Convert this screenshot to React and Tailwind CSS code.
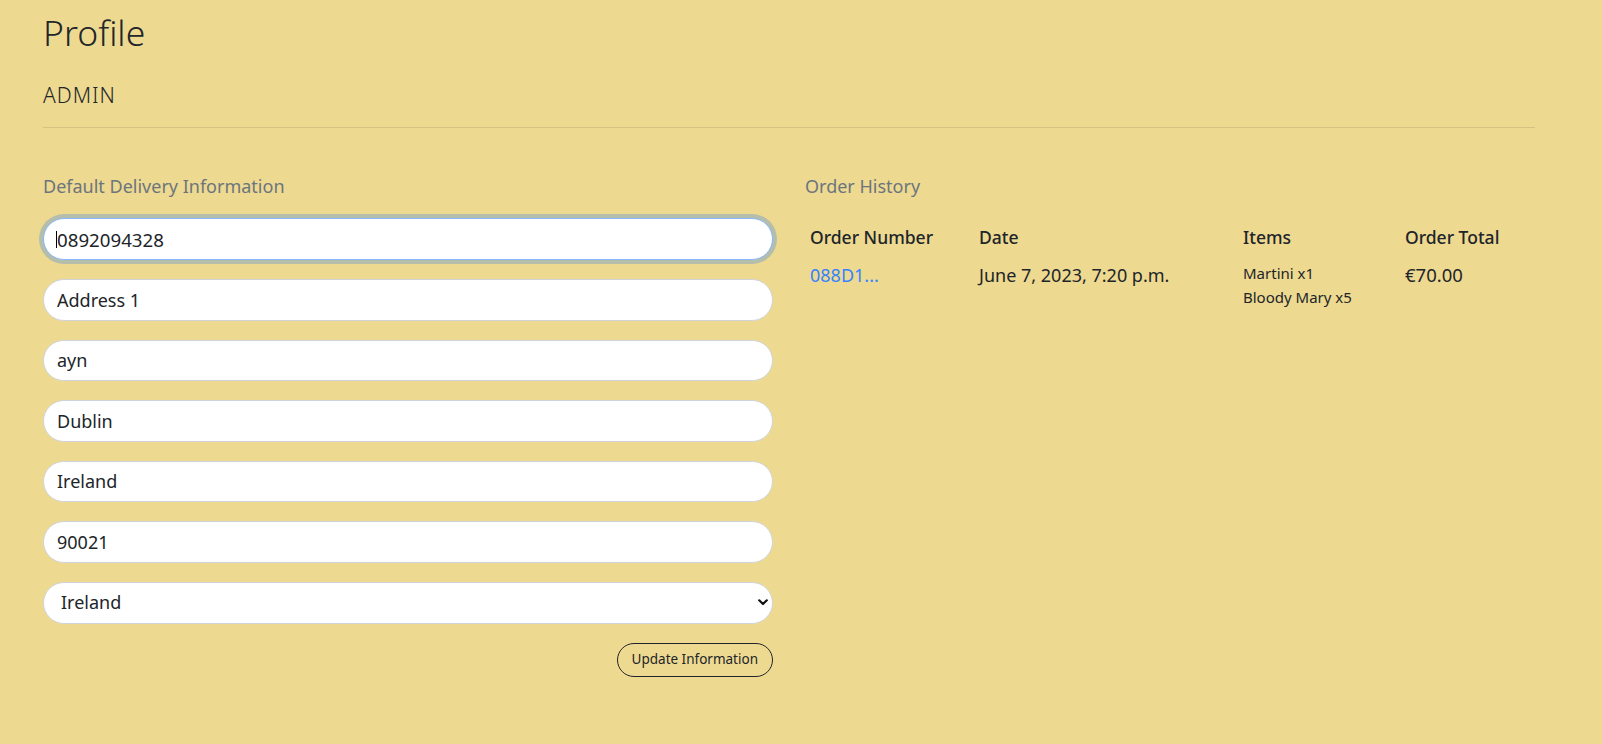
import React from "react";

const inputs = ["Address 1", "ayn", "Dublin", "Ireland", "90021"];

export default function App() {
  return (
    <div className="min-h-screen w-full bg-[#eed991] text-[#212529] font-[family-name:Noto_Sans,sans-serif]">
      <div className="pl-[43px] w-[1535px]">
        <h1 className="pt-[12px] text-[35.5px] leading-[40px] font-light text-[#22262a]">Profile</h1>
        <div className="mt-[29px] text-[21px] leading-[28px] tracking-[1px] font-light">ADMIN</div>
        <div className="mt-[18px] border-t border-[#d5c384]" />

        <div className="mt-[46px] grid grid-cols-2 gap-[32px]">
          {/* Left column */}
          <div className="flex flex-col">
            <div className="text-[18px] leading-[24px] text-[#6c757d]">Default Delivery Information</div>
            <div className="mt-[20px] flex flex-col gap-[19px]">
              <div className="relative">
                <input
                  defaultValue="0892094328"
                  className="block w-full h-[42px] rounded-full bg-white border border-[#86b7fe] pl-[13px] text-[18.7px] text-[#212529] outline-none shadow-[0_0_0_4px_rgba(13,110,253,0.25)]"
                />
                <span className="absolute left-[13px] top-[13px] w-[1px] h-[17px] bg-black" />
              </div>
              {inputs.map((v) => (
                <input
                  key={v}
                  defaultValue={v}
                  className="block w-full h-[41.5px] rounded-full bg-white border border-[#ced4da] pl-[13px] text-[18px] text-[#212529] outline-none"
                />
              ))}
              <div className="relative">
                <select
                  defaultValue="Ireland"
                  className="block w-full h-[42px] appearance-none rounded-full bg-white border border-[#ced4da] pl-[17px] text-[18px] text-[#212529] outline-none"
                >
                  <option>Ireland</option>
                  <option>United Kingdom</option>
                </select>
                <svg
                  className="pointer-events-none absolute right-[5px] top-[17px]"
                  width="10"
                  height="7"
                  viewBox="0 0 10 7"
                  fill="none"
                >
                  <path d="M1.2 1.3 L5 5 L8.8 1.3" stroke="#111" strokeWidth="2.2" strokeLinecap="round" strokeLinejoin="round" />
                </svg>
              </div>
            </div>
            <div className="mt-[19px] flex justify-end">
              <button className="h-[34px] px-[14px] rounded-full border border-[#212529] bg-transparent text-[13.5px] font-normal text-[#212529]">
                Update Information
              </button>
            </div>
          </div>

          {/* Right column */}
          <div className="flex flex-col">
            <div className="text-[18px] leading-[24px] text-[#6c757d]">Order History</div>
            <div className="mt-[27px] pl-[5px] grid grid-cols-[169px_264px_162px_1fr] text-[17.5px] leading-[24px] font-medium">
              <div>Order Number</div>
              <div>Date</div>
              <div>Items</div>
              <div>Order Total</div>
            </div>
            <div className="mt-[12px] pl-[5px] grid grid-cols-[169px_264px_162px_1fr] items-start">
              <a href="#" className="pt-[2px] text-[18px] leading-[24px] text-[#3584fc] no-underline">088D1...</a>
              <div className="pt-[2px] text-[18px] leading-[24px]">June 7, 2023, 7:20 p.m.</div>
              <div className="flex flex-col text-[15px] leading-[24px]">
                <span>Martini x1</span>
                <span>Bloody Mary x5</span>
              </div>
              <div className="pt-[2px] text-[18.5px] leading-[24px]">€70.00</div>
            </div>
          </div>
        </div>
      </div>
    </div>
  );
}
